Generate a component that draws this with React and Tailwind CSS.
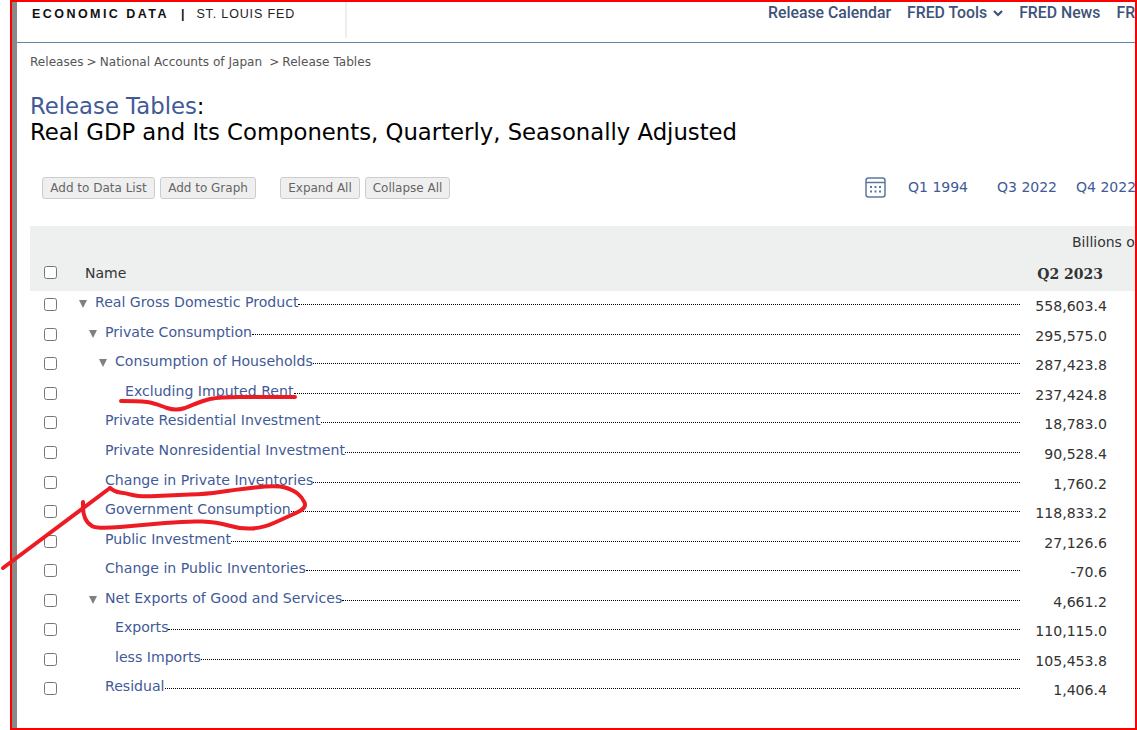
import React from "react";

const rows = [
  ["Real Gross Domestic Product", 0, true, "558,603.4"],
  ["Private Consumption", 1, true, "295,575.0"],
  ["Consumption of Households", 2, true, "287,423.8"],
  ["Excluding Imputed Rent", 3, false, "237,424.8"],
  ["Private Residential Investment", 1, false, "18,783.0"],
  ["Private Nonresidential Investment", 1, false, "90,528.4"],
  ["Change in Private Inventories", 1, false, "1,760.2"],
  ["Government Consumption", 1, false, "118,833.2"],
  ["Public Investment", 1, false, "27,126.6"],
  ["Change in Public Inventories", 1, false, "-70.6"],
  ["Net Exports of Good and Services", 1, true, "4,661.2"],
  ["Exports", 2, false, "110,115.0"],
  ["less Imports", 2, false, "105,453.8"],
  ["Residual", 1, false, "1,406.4"],
];

const indentClass = ["pl-[95px]", "pl-[105px]", "pl-[115px]", "pl-[125px]"];
const arrowClass = ["left-[49px]", "left-[59px]", "left-[69px]", "left-[79px]"];

const loop = [[110,488],[115,492],[125,493],[140,497],[173,495],[207,494],[233,490],[277,485],[293,490],[302,497],[307,508],[287,517],[263,528],[240,529],[217,522],[187,521],[143,525],[97,529],[87,523],[83,513],[83,502]];

function smooth(pts) {
  let d = `M${pts[0][0]} ${pts[0][1]}`;
  for (let i = 1; i < pts.length - 1; i++) {
    const mx = (pts[i][0] + pts[i + 1][0]) / 2;
    const my = (pts[i][1] + pts[i + 1][1]) / 2;
    d += `Q${pts[i][0]} ${pts[i][1]} ${mx} ${my}`;
  }
  const last = pts[pts.length - 1];
  return d + `L${last[0]} ${last[1]}`;
}

function Box({ className = "" }) {
  return <span className={`block w-[13px] h-[13px] rounded-[2.5px] border border-[#767676] bg-white ${className}`} />;
}

function Btn({ children, className = "" }) {
  return (
    <span className={`flex items-center justify-center h-[22px] rounded-[3px] border border-[#cccccc] bg-[#efefef] text-[#666] text-[12px] ${className}`}>
      {children}
    </span>
  );
}

function Row({ name, level, arrow, value }) {
  return (
    <div className="relative flex h-[29.55px] items-start">
      <Box className="absolute left-[14px] top-[7px]" />
      {arrow && <span className={`absolute top-[9px] ${arrowClass[level]} w-0 h-0 border-l-[4.5px] border-r-[4.5px] border-t-[8px] border-l-transparent border-r-transparent border-t-[#808080]`} />}
      <div className={`flex flex-1 items-start -ml-[30px] ${indentClass[level]}`}>
        <a className="text-[#415a97] text-[14.1px] leading-[22px] whitespace-nowrap">{name}</a>
        <span className="flex-1 mt-[13px] border-b border-dotted border-black mr-[115px]" />
      </div>
      <span className="absolute right-[28px] top-[4px] text-[#333] text-[14.1px] leading-[22px]">{value}</span>
    </div>
  );
}

export default function App() {
  return (
    <div className="relative w-[1137px] h-[730px] overflow-hidden bg-white font-['DejaVu_Sans',sans-serif]">
      <div className="ml-[10px] h-full flex flex-col border-2 border-[#ff0000]">
        <div className="flex flex-1 min-h-0">
          <div className="w-[5px] bg-[#8a8a8a] shrink-0" />
          <div className="flex-1 min-w-0 overflow-hidden">
            <header className="relative flex h-[41px] border-b border-[#5f86a3] whitespace-nowrap">
              <div className="flex w-[330px] h-[36px] border-r-2 border-[#eeeeee] items-start pt-[4px] pl-[15px] font-['Liberation_Sans',sans-serif]">
                <span className="text-[12.5px] font-bold tracking-[2.45px] text-[#111] leading-[16px]">ECONOMIC DATA</span>
                <span className="ml-[12px] text-[12.5px] font-bold text-[#111] leading-[16px]">|</span>
                <span className="ml-[12px] text-[12.5px] tracking-[0.85px] text-[#222] leading-[16px]">ST. LOUIS FED</span>
              </div>
              <nav className="absolute left-[751px] top-[1px] flex items-center gap-[16px] font-['Roboto',sans-serif] text-[15.8px] font-medium text-[#3e5379] leading-[20px]">
                <span>Release Calendar</span>
                <span className="flex items-center gap-[6px]">
                  FRED Tools
                  <svg width="10" height="7" viewBox="0 0 10 7" fill="none" stroke="#3e5379" strokeWidth="2.2"><path d="M1 1l4 4 4-4" /></svg>
                </span>
                <span>FRED News</span>
                <span>FRED Blog</span>
              </nav>
            </header>

            <main className="relative pl-[13px]">
              <div className="flex gap-[3px] pt-[11px] text-[12.1px] leading-[16px] text-[#555] whitespace-nowrap">
                <span>Releases</span><span>&gt;</span><span>National Accounts of Japan</span><span className="ml-[4px]">&gt;</span><span>Release Tables</span>
              </div>
              <h1 className="mt-[23px] text-[22.75px] leading-[26px] font-normal text-black whitespace-nowrap">
                <span className="text-[#415a97]">Release Tables</span>:<br />
                Real GDP and Its Components, Quarterly, Seasonally Adjusted
              </h1>

              <div className="relative flex items-center mt-[32px] pl-[12px] h-[22px] whitespace-nowrap">
                <Btn className="w-[113px]">Add to Data List</Btn>
                <Btn className="ml-[5px] w-[96px]">Add to Graph</Btn>
                <Btn className="ml-[24px] w-[80px]">Expand All</Btn>
                <Btn className="ml-[5px] w-[85px]">Collapse All</Btn>
                <div className="absolute left-[835px] top-0 flex items-center text-[#415a97] text-[14px]">
                  <svg width="21" height="21" viewBox="0 0 21 21" fill="none">
                    <rect x="1" y="1" width="19" height="19" rx="2.5" stroke="#5b789c" strokeWidth="1.5" />
                    <path d="M1 5.5h19" stroke="#5b789c" strokeWidth="1.5" />
                    <g fill="#5b789c">
                      <rect x="5" y="9" width="2" height="2" /><rect x="9.5" y="9" width="2" height="2" /><rect x="14" y="9" width="2" height="2" />
                      <rect x="5" y="13.5" width="2" height="2" /><rect x="9.5" y="13.5" width="2" height="2" /><rect x="14" y="13.5" width="2" height="2" />
                    </g>
                  </svg>
                  <span className="ml-[22px]">Q1 1994</span>
                  <span className="ml-[29px]">Q3 2022</span>
                  <span className="ml-[19px]">Q4 2022</span>
                </div>
              </div>

              <div className="relative mt-[27px] h-[65px] bg-[#eef0f0]">
                <span className="absolute left-[1042px] top-[7px] text-[14px] leading-[18px] text-[#333] whitespace-nowrap">Billions of Yen</span>
                <Box className="absolute left-[14px] top-[40px]" />
                <span className="absolute left-[55px] top-[38px] text-[14px] leading-[18px] text-[#333]">Name</span>
                <span className="absolute right-[32px] top-[39px] text-[14px] leading-[18px] font-bold font-['DejaVu_Serif',serif] text-[#333]">Q2 2023</span>
              </div>

              <div className="pt-[0.3px]">
                {rows.map((r) => (
                  <Row key={r[0]} name={r[0]} level={r[1]} arrow={r[2]} value={r[3]} />
                ))}
              </div>
            </main>
          </div>
        </div>
      </div>

      <svg className="absolute inset-0 pointer-events-none" width="1137" height="730" fill="none" stroke="#ed1c24" strokeWidth="4" strokeLinecap="round" strokeLinejoin="round">
        <path d="M121 401c9 0 17 0 26 1 8 1 14 4 20 6 6 2 12 2 18 0 8-3 16-7 25-9 10-2 20-2 30-2h55" />
        <path d="M3 568L110 488" />
        <path d={smooth(loop)} />
      </svg>
    </div>
  );
}
